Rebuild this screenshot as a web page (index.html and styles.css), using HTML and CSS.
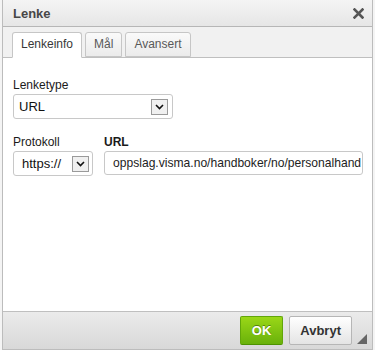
FILE: index.html
```html
<!DOCTYPE html>
<html lang="no">
<head>
<meta charset="utf-8">
<title>Lenke</title>
<link rel="stylesheet" href="styles.css">
</head>
<body>
<div class="dialog">
  <div class="title">
    <span>Lenke</span>
    <svg class="close" width="11" height="11" viewBox="0 0 11 11"><path d="M1.5 1.5 L9.5 9.5 M9.5 1.5 L1.5 9.5" stroke="#555" stroke-width="2.6" stroke-linecap="square"/></svg>
  </div>
  <div class="tabs">
    <span class="tab selected">Lenkeinfo</span>
    <span class="tab">Mål</span>
    <span class="tab">Avansert</span>
  </div>
  <div class="content">
    <div class="field">
      <label class="label">Lenketype</label>
      <div class="select wide">
        <span class="value">URL</span>
        <span class="arrow"><svg width="9" height="6" viewBox="0 0 9 6"><path d="M1 1 L4.5 4.5 L8 1" fill="none" stroke="#111" stroke-width="1.6"/></svg></span>
      </div>
    </div>
    <div class="row">
      <div class="field">
        <label class="label">Protokoll</label>
        <div class="select narrow">
          <span class="value">https://</span>
          <span class="arrow"><svg width="9" height="6" viewBox="0 0 9 6"><path d="M1 1 L4.5 4.5 L8 1" fill="none" stroke="#111" stroke-width="1.6"/></svg></span>
        </div>
      </div>
      <div class="field grow">
        <label class="label bold">URL</label>
        <div class="input">oppslag.visma.no/handboker/no/personalhand</div>
      </div>
    </div>
  </div>
  <div class="footer">
    <span class="btn ok">OK</span>
    <span class="btn cancel">Avbryt</span>
    <span class="grip"></span>
  </div>
</div>
</body>
</html>
```

FILE: styles.css
```css
html, body {
  margin: 0;
  padding: 0;
}
body {
  background: #f4f4f4;
  font-family: "Liberation Sans", Arial, sans-serif;
  width: 375px;
  height: 350px;
  overflow: hidden;
}
.dialog {
  margin-left: 2px;
  width: 369px;
  height: 349px;
  border: 1px solid #bcbcbc;
  border-top: none;
  display: flex;
  flex-direction: column;
  background: #fff;
}
.title {
  height: 27px;
  box-sizing: border-box;
  border-bottom: 1px solid #b6b6b6;
  background: linear-gradient(#f4f4f4, #e6e6e6);
  padding: 0 6px 0 10px;
  display: flex;
  align-items: center;
  justify-content: space-between;
  font-weight: bold;
  font-size: 13px;
  color: #474747;
}
.close {
  margin-right: 2px;
}
.tabs {
  height: 31px;
  box-sizing: border-box;
  background: #f1f1f1;
  border-bottom: 1px solid #bfbfbf;
  padding: 5px 0 0 9px;
  display: flex;
  align-items: flex-start;
  gap: 3px;
}
.tab {
  height: 25px;
  box-sizing: border-box;
  padding: 0 8px;
  line-height: 23px;
  font-size: 12px;
  color: #595959;
  border: 1px solid #c6c6c6;
  border-radius: 3px 3px 0 0;
  background: linear-gradient(#fafafa, #ebebeb);
}
.tab.selected {
  background: #fff;
  color: #383838;
  border-bottom-color: #fff;
  height: 26px;
}
.content {
  flex: 1;
  padding: 20px 10px 0 10px;
  display: flex;
  flex-direction: column;
  gap: 16px;
}
.field {
  display: flex;
  flex-direction: column;
  gap: 2px;
}
.label {
  font-size: 12px;
  color: #1a1a1a;
  line-height: 14px;
}
.label.bold {
  font-weight: bold;
}
.select {
  height: 25px;
  box-sizing: border-box;
  border: 1px solid #c8c8c8;
  border-radius: 3px;
  display: flex;
  align-items: center;
  justify-content: space-between;
  padding: 0 4px 0 5px;
  font-size: 13px;
  color: #111;
}
.select.wide {
  width: 160px;
}
.select.narrow {
  width: 80px;
  padding-left: 8px;
  padding-right: 3px;
}
.arrow {
  width: 17px;
  height: 16px;
  box-sizing: border-box;
  border: 1px solid #9a9a9a;
  background: #f0f0f0;
  display: flex;
  align-items: center;
  justify-content: center;
}
.row {
  display: flex;
  gap: 11px;
}
.grow {
  flex: 1;
}
.input {
  height: 24px;
  box-sizing: border-box;
  border: 1px solid #c8c8c8;
  border-radius: 3px;
  padding: 0 0 0 8px;
  line-height: 22px;
  font-size: 12.1px;
  color: #222;
  white-space: nowrap;
  overflow: hidden;
  width: 259px;
}
.footer {
  height: 38px;
  box-sizing: border-box;
  border-top: 1px solid #bfbfbf;
  background: linear-gradient(#ebebeb, #d8d8d8);
  display: flex;
  justify-content: flex-end;
  align-items: flex-start;
  padding: 4px 20px 0 0;
  gap: 6px;
  position: relative;
}
.btn {
  height: 29px;
  box-sizing: border-box;
  padding: 0 11px;
  line-height: 27px;
  font-size: 13px;
  font-weight: bold;
  color: #333;
  border: 1px solid #b6b6b6;
  border-radius: 2px;
  background: linear-gradient(#ffffff, #e4e4e4);
}
.btn.cancel {
  padding: 0 10px;
}
.btn.ok {
  color: #fff;
  border-color: #62a60a #62a60a #4d9200;
  background: linear-gradient(#9ad717, #69b10b);
  text-shadow: 0 -1px 0 #55830c;
}
.grip {
  position: absolute;
  right: 5px;
  bottom: 5px;
  width: 0;
  height: 0;
  border-style: solid;
  border-width: 0 0 10px 10px;
  border-color: transparent transparent #666 transparent;
}
```
